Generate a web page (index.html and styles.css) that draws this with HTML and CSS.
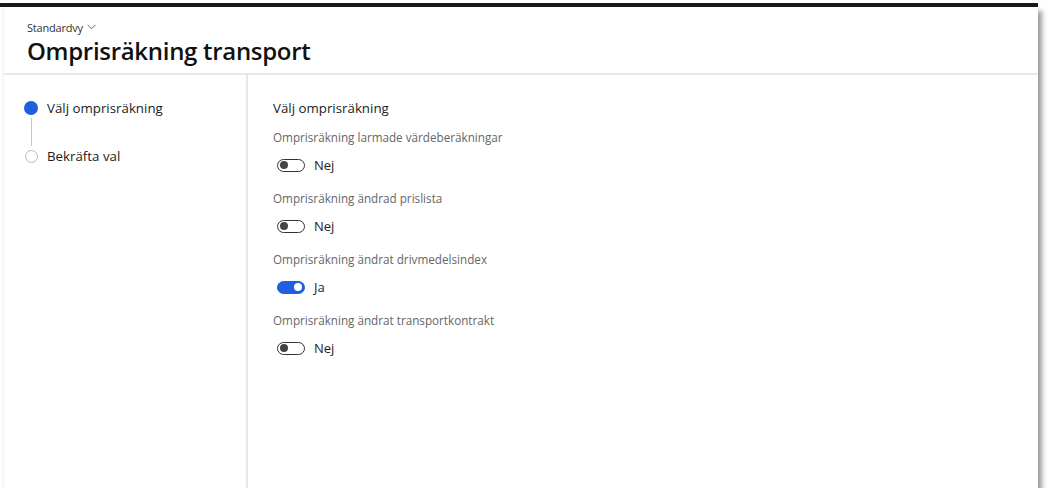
FILE: index.html
```html
<!DOCTYPE html>
<html lang="sv">
<head>
    <meta charset="UTF-8">
    <meta name="viewport" content="width=device-width, initial-scale=1.0">
    <title>Omprisräkning transport</title>
    <link rel="stylesheet" href="styles.css">
</head>
<body>
    <div class="topbar"></div>
    <div class="card">
        <div class="header">
            <div class="view">Standardvy
                <svg width="9" height="6" viewBox="0 0 9 6"><path d="M0.5 0.8 L4.5 4.8 L8.5 0.8" fill="none" stroke="#555" stroke-width="0.9"/></svg>
            </div>
            <h1>Omprisräkning transport</h1>
        </div>
        <div class="body">
            <div class="steps">
                <div class="step">
                    <span class="dot active"></span>
                    <span>Välj omprisräkning</span>
                </div>
                <div class="connector"></div>
                <div class="step">
                    <span class="dot"></span>
                    <span>Bekräfta val</span>
                </div>
            </div>
            <div class="content">
                <div class="title">Välj omprisräkning</div>
                <div class="field">
                    <div class="label">Omprisräkning larmade värdeberäkningar</div>
                    <div class="toggle-row"><span class="toggle"></span>Nej</div>
                </div>
                <div class="field">
                    <div class="label">Omprisräkning ändrad prislista</div>
                    <div class="toggle-row"><span class="toggle"></span>Nej</div>
                </div>
                <div class="field">
                    <div class="label">Omprisräkning ändrat drivmedelsindex</div>
                    <div class="toggle-row"><span class="toggle on"></span>Ja</div>
                </div>
                <div class="field">
                    <div class="label">Omprisräkning ändrat transportkontrakt</div>
                    <div class="toggle-row"><span class="toggle"></span>Nej</div>
                </div>
            </div>
        </div>
    </div>
</body>
</html>
```

FILE: styles.css
```css
body {margin: 0; background: #fff; font-family: "Open Sans", "Noto Sans", sans-serif; color: #222;}
.topbar {height: 4px; width: 1038px; margin-top: 3px; background: #1b1b1b;}
.card {margin-left: 4px; width: 1034px; height: 481px; background: #fff; box-shadow: 4px 4px 5px rgba(0,0,0,0.4), -1px 0 2px rgba(0,0,0,0.06); display: flex; flex-direction: column;}
.header {padding: 14px 0 0 23px; height: 52px; border-bottom: 2px solid #e8e8e8;}
.view {font-size: 11px; line-height: 14px; color: #333; letter-spacing: -0.2px;}
.view svg {margin-left: 1px; vertical-align: 2px;}
h1 {margin: 1px 0 0 0; font-size: 24px; line-height: 30px; font-weight: 600; color: #111; letter-spacing: -0.3px;}
.body {flex: 1; display: flex;}
.steps {width: 244px; border-right: 2px solid #e8e8e8; padding-top: 23px; box-sizing: border-box;}
.step {display: flex; align-items: center; height: 20px; padding-left: 19px; font-size: 13.3px; color: #222;}
.dot {width: 13px; height: 13px; border-radius: 50%; border: 1px solid #bbb; margin-right: 9px; box-sizing: border-box; margin-left: 2px;}
.dot.active {width: 14px; height: 14px; margin-left: 1px; margin-right: 9px; background: #1f5fe0; border: none;}
.connector {width: 1px; height: 28px; background: #c8c8c8; margin-left: 27px;}
.content {padding: 23px 0 0 25px;}
.title {font-size: 13.3px; line-height: 20px; color: #222;}
.field {margin-top: 11px;}
.field + .field {margin-top: 15px;}
.label {font-size: 11.7px; line-height: 16px; color: #666;}
.toggle-row {display: flex; align-items: center; height: 20px; margin-top: 10px; padding-left: 4px; font-size: 13px; color: #222;}
.toggle {position: relative; width: 28px; height: 13px; border: 1px solid #333; border-radius: 8px; box-sizing: border-box; margin-right: 9px;}
.toggle::after {content: ""; position: absolute; left: 2px; top: 1.5px; width: 8px; height: 8px; border-radius: 50%; background: #444;}
.toggle.on {background: #1f5fe0; border-color: #1f5fe0;}
.toggle.on::after {left: auto; right: 2px; background: #fff;}
```
